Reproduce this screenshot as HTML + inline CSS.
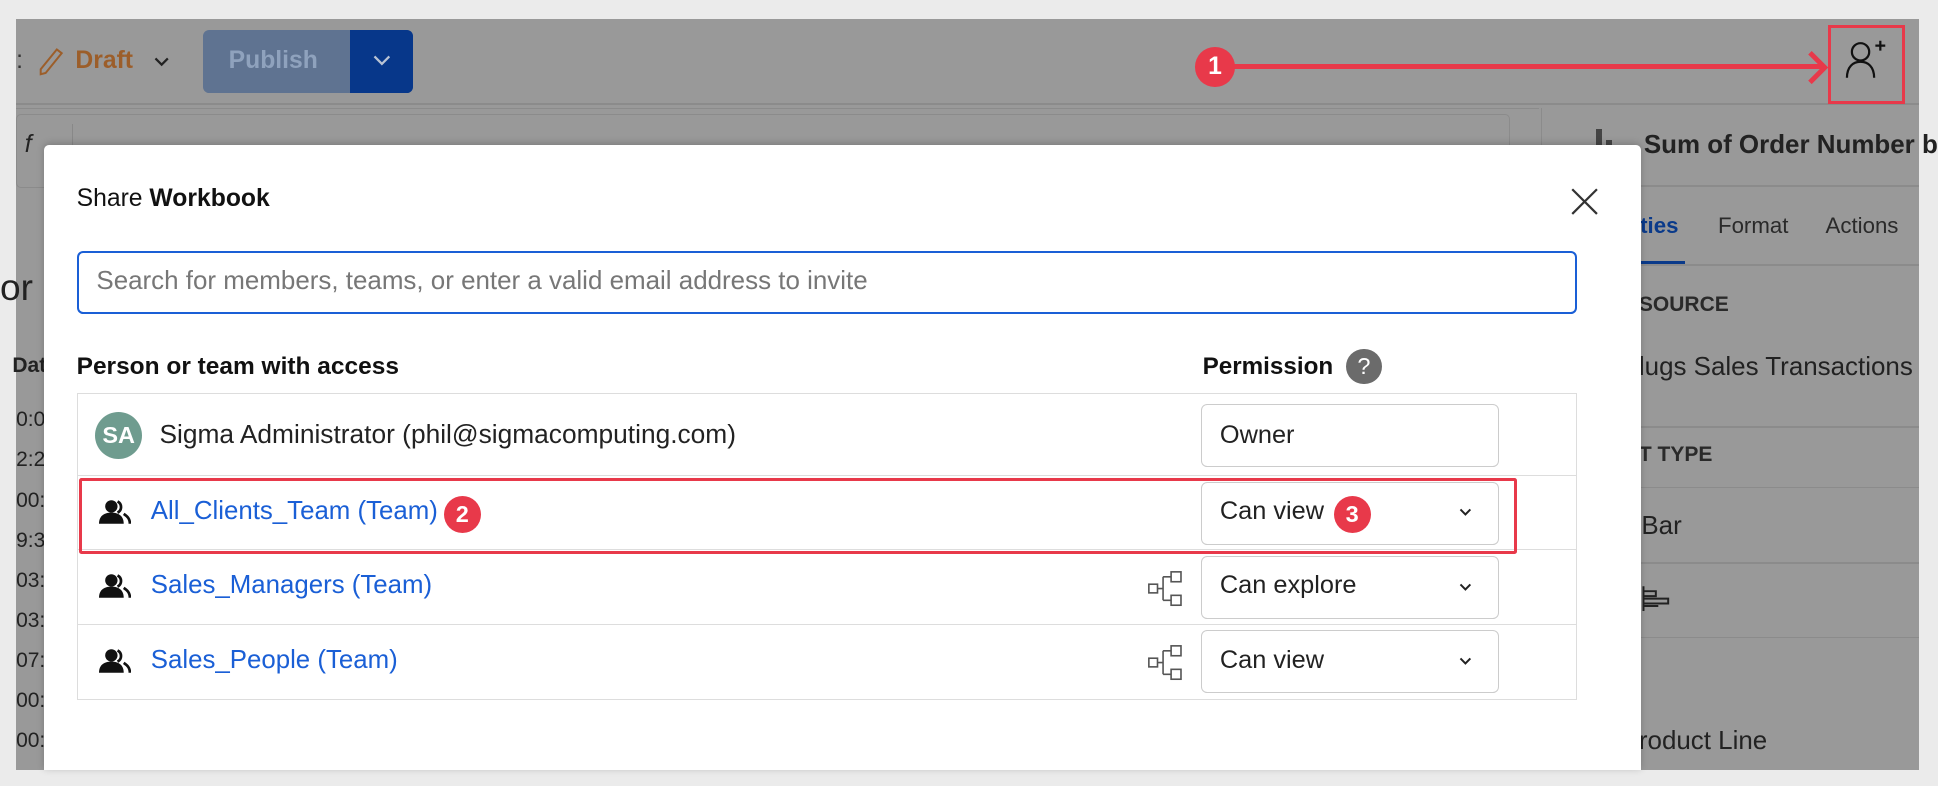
<!DOCTYPE html>
<html><head><meta charset="utf-8"><style>
*{box-sizing:border-box;margin:0;padding:0}
html,body{width:1938px;height:786px;overflow:hidden;background:#ebebeb;font-family:"Liberation Sans",sans-serif}
#w{position:absolute;left:0;top:0;width:1568px;height:636px;zoom:1.23597}
.a{position:absolute}
.t{position:absolute;white-space:nowrap;line-height:1}
</style></head><body><div id="w">
<div class="a" style="left:13px;top:15px;width:1540px;height:608px;background:#999;overflow:hidden">
<div class="t" style="left:0px;top:309px;font-size:17px;color:#222;line-height:32.4px;white-space:pre">0:0
2:2
00:0
9:3
03:5
03:5
07:4
00:4
00:4
01:1</div>
</div>
<div class="a" style="left:13px;top:83px;width:1540px;height:2px;background:#8b8b8b"></div>
<div class="a" style="left:13px;top:87px;width:1232px;height:1px;background:#8b8b8b"></div>
<div class="t" style="left:13px;top:40px;font-size:20px;color:#333">:</div>
<svg class="a" style="left:30px;top:38px" width="22" height="24" viewBox="0 0 22 24"><path d="M16 2 L20 5 L7 21 L3 22 L3 18 Z" fill="none" stroke="#9c5e2a" stroke-width="1.6"/></svg>
<div class="t" style="left:61px;top:40px;font-size:20px;font-weight:bold;color:#9c5e2a">Draft</div>
<svg class="a" style="left:124px;top:45px" width="14" height="10"><path d="M2 2 L7 7 L12 2" fill="none" stroke="#222" stroke-width="1.8"/></svg>
<div class="a" style="left:164px;top:24px;width:170px;height:51px;background:#5f7391;border-radius:5px"></div>
<div class="t" style="left:185px;top:40px;font-size:20px;font-weight:bold;color:#8fa2bd">Publish</div>
<div class="a" style="left:283px;top:24px;width:51px;height:51px;background:#07378a;border-radius:0 5px 5px 0"></div>
<svg class="a" style="left:301px;top:44px" width="16" height="10"><path d="M2 2 L8 8 L14 2" fill="none" stroke="#b9c3d4" stroke-width="1.8"/></svg>
<div class="a" style="left:13px;top:92px;width:1209px;height:60px;border:1px solid #8b8b8b;border-radius:4px"></div>
<div class="t" style="left:20px;top:108px;font-size:20px;color:#222;font-style:italic">f</div>
<div class="a" style="left:58px;top:100px;width:1px;height:22px;background:#888"></div>
<div class="t" style="left:0px;top:218px;font-size:30px;color:#222">or</div>
<div class="t" style="left:10px;top:287px;font-size:17px;font-weight:bold;color:#222">Dat</div>
<div class="a" style="left:1247px;top:87px;width:1px;height:536px;background:#8b8b8b"></div>
<div class="a" style="left:1291px;top:104px;width:5px;height:18px;background:#444"></div>
<div class="a" style="left:1299px;top:113px;width:5px;height:9px;background:#444"></div>
<div class="t" style="left:1330px;top:108px;font-size:21px;font-weight:bold;color:#222">Sum of Order Number b</div>
<div class="a" style="left:1247px;top:150px;width:306px;height:1px;background:#8b8b8b"></div>
<div class="t" style="left:1320px;top:174px;font-size:18px;font-weight:bold;color:#0a3a8a">rties</div>
<div class="t" style="left:1390px;top:174px;font-size:18px;color:#2a2a2a">Format</div>
<div class="t" style="left:1477px;top:174px;font-size:18px;color:#2a2a2a">Actions</div>
<div class="a" style="left:1320px;top:211px;width:43px;height:3px;background:#0a3a8a"></div>
<div class="a" style="left:1247px;top:214px;width:306px;height:1px;background:#8b8b8b"></div>
<div class="t" style="left:1326px;top:238px;font-size:17px;font-weight:bold;color:#2a2a2a">SOURCE</div>
<div class="t" style="left:1326px;top:287px;font-size:21px;color:#222">lugs Sales Transactions</div>
<div class="a" style="left:1247px;top:345px;width:306px;height:1px;background:#8b8b8b"></div>
<div class="t" style="left:1326px;top:359px;font-size:17px;font-weight:bold;color:#2a2a2a">T TYPE</div>
<div class="a" style="left:1247px;top:394px;width:306px;height:1px;background:#8b8b8b"></div>
<div class="t" style="left:1328px;top:416px;font-size:21px;color:#222">Bar</div>
<div class="a" style="left:1247px;top:455px;width:306px;height:1px;background:#8b8b8b"></div>
<svg class="a" style="left:1328px;top:473px" width="26" height="22"><path d="M2 1 V21 M2 5 H12 V9 H2 M2 11 H22 V15 H2 M2 17 H14" fill="none" stroke="#222" stroke-width="1.6"/></svg>
<div class="a" style="left:1247px;top:515px;width:306px;height:1px;background:#8b8b8b"></div>
<div class="t" style="left:1326px;top:590px;font-size:21px;color:#222">roduct Line</div>
<div class="a" style="left:980px;top:52px;width:495px;height:4px;background:#e8394a"></div>
<svg class="a" style="left:1460px;top:40px" width="20" height="30"><path d="M4 3 L16 15 L4 27" fill="none" stroke="#e8394a" stroke-width="4"/></svg>
<div class="a" style="left:967px;top:38px;width:32px;height:32px;border-radius:50%;background:#e8394a;color:#fff;font-weight:bold;font-size:20px;text-align:center;line-height:32px">1</div>
<div class="a" style="left:1479px;top:20px;width:62px;height:64px;border:3px solid #e8394a"></div>
<svg class="a" style="left:1490px;top:30px" width="40" height="40" viewBox="0 0 40 40"><circle cx="15" cy="12" r="7" fill="none" stroke="#111" stroke-width="1.8"/><path d="M4 33 C4 24 9 20 15 20 C21 20 26 24 26 33" fill="none" stroke="#111" stroke-width="1.8"/><path d="M31 3 V11 M27 7 H35" stroke="#111" stroke-width="1.8"/></svg>
<div class="a" style="left:36px;top:117px;width:1292px;height:506px;background:#fff;border-radius:4px 4px 0 0;box-shadow:0 -1px 6px rgba(0,0,0,.2)"></div>
<div class="t" style="left:62px;top:151px;font-size:20px;color:#111">Share <b>Workbook</b></div>
<svg class="a" style="left:1271px;top:152px" width="22" height="22"><path d="M1 1 L21 21 M21 1 L1 21" stroke="#333" stroke-width="1.8"/></svg>
<div class="a" style="left:62px;top:203px;width:1214px;height:51px;border:2px solid #1a5fd6;border-radius:5px"></div>
<div class="t" style="left:78px;top:218px;font-size:21px;color:#777">Search for members, teams, or enter a valid email address to invite</div>
<div class="t" style="left:62px;top:287px;font-size:19.8px;font-weight:bold;color:#111">Person or team with access</div>
<div class="t" style="left:973px;top:287px;font-size:19.6px;font-weight:bold;color:#111">Permission</div>
<div class="a" style="left:1089px;top:282px;width:29px;height:29px;border-radius:50%;background:#6b6b6b;color:#fff;font-size:19px;text-align:center;line-height:29px">?</div>
<div class="a" style="left:62px;top:318px;width:1214px;height:248px;border:1px solid #ddd"></div>
<div class="a" style="left:62px;top:384px;width:1214px;height:1px;background:#ddd"></div>
<div class="a" style="left:62px;top:444px;width:1214px;height:1px;background:#ddd"></div>
<div class="a" style="left:62px;top:505px;width:1214px;height:1px;background:#ddd"></div>
<div class="a" style="left:77px;top:333px;width:38px;height:38px;border-radius:50%;background:#6f9c8f;color:#fff;font-size:19px;font-weight:bold;text-align:center;line-height:38px">SA</div>
<div class="t" style="left:129px;top:341px;font-size:21.3px;color:#222">Sigma Administrator (phil@sigmacomputing.com)</div>
<div class="a" style="left:972px;top:327px;width:241px;height:51px;border:1px solid #ccc;border-radius:5px"></div>
<div class="t" style="left:987px;top:342px;font-size:20.5px;color:#222">Owner</div>
<svg class="a" style="left:80px;top:404px" width="26" height="22" viewBox="0 0 26 22"><circle cx="10" cy="6" r="5" fill="#111"/><path d="M0 20 C0 13 5 11 10 11 C15 11 20 13 20 20 Z" fill="#111"/><path d="M15 2 A5 5 0 0 1 15 11 M20 12 C23 14 25 16 25 20" fill="none" stroke="#111" stroke-width="2.2"/></svg>
<div class="t" style="left:122px;top:404px;font-size:20.9px;color:#1a5fd6">All_Clients_Team (Team)</div>
<div class="a" style="left:359px;top:401px;width:30px;height:30px;border-radius:50%;background:#e8394a;color:#fff;font-weight:bold;font-size:19px;text-align:center;line-height:30px">2</div>
<div class="a" style="left:972px;top:390px;width:241px;height:51px;border:1px solid #ccc;border-radius:5px"></div>
<div class="t" style="left:987px;top:404px;font-size:20.5px;color:#222">Can view</div>
<div class="a" style="left:1079px;top:401px;width:30px;height:30px;border-radius:50%;background:#e8394a;color:#fff;font-weight:bold;font-size:19px;text-align:center;line-height:30px">3</div>
<svg class="a" style="left:1180px;top:410px" width="12" height="8"><path d="M2 2 L6 6 L10 2" fill="none" stroke="#222" stroke-width="1.6"/></svg>
<div class="a" style="left:64px;top:387px;width:1163px;height:61px;border:3px solid #e8394a;border-radius:2px"></div>
<svg class="a" style="left:80px;top:464px" width="26" height="22" viewBox="0 0 26 22"><circle cx="10" cy="6" r="5" fill="#111"/><path d="M0 20 C0 13 5 11 10 11 C15 11 20 13 20 20 Z" fill="#111"/><path d="M15 2 A5 5 0 0 1 15 11 M20 12 C23 14 25 16 25 20" fill="none" stroke="#111" stroke-width="2.2"/></svg>
<div class="t" style="left:122px;top:464px;font-size:20.9px;color:#1a5fd6">Sales_Managers (Team)</div>
<svg class="a" style="left:928px;top:461px" width="30" height="30" viewBox="0 0 30 30"><g fill="none" stroke="#555" stroke-width="1.3"><rect x="1.5" y="11.5" width="7" height="7"/><rect x="19.5" y="1.5" width="8" height="8"/><rect x="19.5" y="20.5" width="8" height="8"/><path d="M8.5 15 H13 M13 5.5 V24.5 M13 5.5 H19.5 M13 24.5 H19.5"/></g></svg>
<div class="a" style="left:972px;top:450px;width:241px;height:51px;border:1px solid #ccc;border-radius:5px"></div>
<div class="t" style="left:987px;top:464px;font-size:20.5px;color:#222">Can explore</div>
<svg class="a" style="left:1180px;top:471px" width="12" height="8"><path d="M2 2 L6 6 L10 2" fill="none" stroke="#222" stroke-width="1.6"/></svg>
<svg class="a" style="left:80px;top:524px" width="26" height="22" viewBox="0 0 26 22"><circle cx="10" cy="6" r="5" fill="#111"/><path d="M0 20 C0 13 5 11 10 11 C15 11 20 13 20 20 Z" fill="#111"/><path d="M15 2 A5 5 0 0 1 15 11 M20 12 C23 14 25 16 25 20" fill="none" stroke="#111" stroke-width="2.2"/></svg>
<div class="t" style="left:122px;top:524px;font-size:20.9px;color:#1a5fd6">Sales_People (Team)</div>
<svg class="a" style="left:928px;top:521px" width="30" height="30" viewBox="0 0 30 30"><g fill="none" stroke="#555" stroke-width="1.3"><rect x="1.5" y="11.5" width="7" height="7"/><rect x="19.5" y="1.5" width="8" height="8"/><rect x="19.5" y="20.5" width="8" height="8"/><path d="M8.5 15 H13 M13 5.5 V24.5 M13 5.5 H19.5 M13 24.5 H19.5"/></g></svg>
<div class="a" style="left:972px;top:510px;width:241px;height:51px;border:1px solid #ccc;border-radius:5px"></div>
<div class="t" style="left:987px;top:524px;font-size:20.5px;color:#222">Can view</div>
<svg class="a" style="left:1180px;top:531px" width="12" height="8"><path d="M2 2 L6 6 L10 2" fill="none" stroke="#222" stroke-width="1.6"/></svg>
</div></body></html>
